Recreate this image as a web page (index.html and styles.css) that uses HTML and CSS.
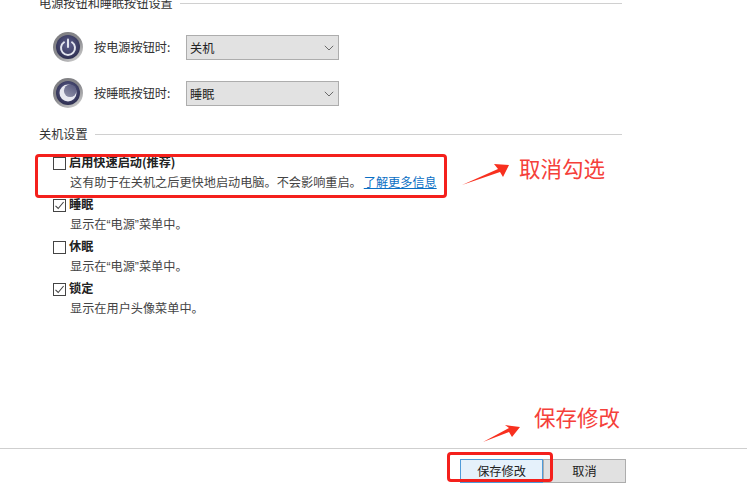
FILE: index.html
```html
<!DOCTYPE html>
<html lang="zh-CN">
<head>
<meta charset="utf-8">
<title>电源选项</title>
<link rel="stylesheet" href="styles.css">
</head>
<body>
<div class="page">
  <main class="content">
    <div class="section-head first"><span>电源按钮和睡眠按钮设置</span></div>
    <div class="power-rows">
      <div class="power-row">
        <svg class="orb" viewBox="0 0 30 30" aria-hidden="true">
          <defs>
            <linearGradient id="ring" x1="0.2" y1="0" x2="0.8" y2="1">
              <stop offset="0" stop-color="#7d7d80"/><stop offset=".5" stop-color="#8a8a8e"/><stop offset="1" stop-color="#cfcfcf"/>
            </linearGradient>
            <radialGradient id="core" cx=".5" cy=".4" r=".65">
              <stop offset="0" stop-color="#5f618f"/><stop offset="1" stop-color="#2a2b4c"/>
            </radialGradient>
            <linearGradient id="moon" x1="0.8" y1="0" x2="0.2" y2="1">
              <stop offset="0" stop-color="#5a5c80"/><stop offset="1" stop-color="#8e90a8"/>
            </linearGradient>
          </defs>
          <circle cx="15" cy="15" r="15" fill="url(#ring)"/>
          <circle cx="15" cy="15" r="12" fill="url(#core)"/>
          <path d="M11 10.200a7 7 0 1 0 8 0" fill="none" stroke="#e2e4ee" stroke-width="2" stroke-linecap="round"/>
          <path d="M15 7.500v7.500" stroke="#e2e4ee" stroke-width="2" stroke-linecap="round"/>
        </svg>
        <span class="power-label">按电源按钮时:</span>
        <div class="select"><span>关机</span><svg class="chev" viewBox="0 0 10 6" aria-hidden="true"><path d="M.8.8 5 5 9.2.8" fill="none" stroke="#6a6a6a" stroke-width="1"/></svg></div>
      </div>
      <div class="power-row">
        <svg class="orb" viewBox="0 0 30 30" aria-hidden="true">
          <circle cx="15" cy="15" r="15" fill="url(#ring)"/>
          <circle cx="15" cy="15" r="12" fill="url(#core)"/>
          <circle cx="15" cy="15" r="8.500" fill="#e8e9f1"/>
          <circle cx="17.200" cy="12.800" r="6.300" fill="url(#moon)"/>
        </svg>
        <span class="power-label">按睡眠按钮时:</span>
        <div class="select"><span>睡眠</span><svg class="chev" viewBox="0 0 10 6" aria-hidden="true"><path d="M.8.8 5 5 9.2.8" fill="none" stroke="#6a6a6a" stroke-width="1"/></svg></div>
      </div>
    </div>

    <div class="section-head second"><span>关机设置</span></div>
    <div class="options">
      <div class="option">
        <div class="option-title"><span class="check"></span><b>启用快速启动(推荐)</b></div>
        <div class="option-desc">这有助于在关机之后更快地启动电脑。不会影响重启。<a class="more" href="#">了解更多信息</a></div>
      </div>
      <div class="option">
        <div class="option-title"><span class="check"><svg viewBox="0 0 11 11" aria-hidden="true"><path d="M1.500 5.800 4.200 8.500 9.600 2" fill="none" stroke="#444" stroke-width="1.100"/></svg></span><b>睡眠</b></div>
        <div class="option-desc">显示在<span class="quote">“</span>电源<span class="quote">”</span>菜单中。</div>
      </div>
      <div class="option">
        <div class="option-title"><span class="check"></span><b>休眠</b></div>
        <div class="option-desc">显示在<span class="quote">“</span>电源<span class="quote">”</span>菜单中。</div>
      </div>
      <div class="option">
        <div class="option-title"><span class="check"><svg viewBox="0 0 11 11" aria-hidden="true"><path d="M1.500 5.800 4.200 8.500 9.600 2" fill="none" stroke="#444" stroke-width="1.100"/></svg></span><b>锁定</b></div>
        <div class="option-desc">显示在用户头像菜单中。</div>
      </div>
    </div>
  </main>

  <footer class="footer">
    <button class="btn primary" type="button">保存修改</button>
    <button class="btn" type="button">取消</button>
  </footer>

  <div class="mark mark-option"></div>
  <div class="mark mark-save"></div>
  <svg class="arrows" viewBox="0 0 747 494" aria-hidden="true">
    <polygon points="462,185 498,169 494,164 509,165 503,177 500,172" fill="#f8301f"/>
    <polygon points="483,442 509,428 505,425 520,427 512,437 509,432" fill="#f8301f"/>
  </svg>
  <span class="note note-uncheck">取消勾选</span>
  <span class="note note-save">保存修改</span>
</div>
</body>
</html>
```

FILE: styles.css
```css
* { box-sizing: border-box; }
html, body { margin: 0; padding: 0; background: #fff; }
body {
  font-family: "Noto Sans CJK SC", "Noto Sans", sans-serif;
  font-size: 12.170px;
  color: #222;
  overflow: hidden;
}
.page {
  position: relative;
  width: 747px;
  height: 494px;
  display: flex;
  flex-direction: column;
  overflow: hidden;
}
.content {
  flex: 1;
  padding: 0 125px 0 39px;
}
.section-head {
  display: flex;
  align-items: center;
  gap: 7px;
  height: 14px;
  line-height: 14px;
  color: #333;
  white-space: nowrap;
}
.section-head::after {
  content: "";
  flex: 1;
  height: 1px;
  background: #d0d0d0;
}
.section-head.first { margin-top: -4px; }
.section-head.second { margin-top: 19px; }
.power-rows {
  display: flex;
  flex-direction: column;
  gap: 16px;
  margin-top: 22px;
  padding-left: 14px;
}
.power-row {
  display: flex;
  align-items: center;
  height: 30px;
}
.orb {
  width: 30px;
  height: 30px;
  flex: none;
  margin-right: 11px;
}
.power-label {
  width: 92px;
  flex: none;
  color: #333;
}
.select {
  width: 153px;
  height: 25px;
  display: flex;
  align-items: center;
  justify-content: space-between;
  padding: 1px 4px 0 3px;
  background: #e2e2e2;
  border: 1px solid #adadad;
}
.chev { width: 10px; height: 6px; }
.options {
  margin-top: 11px;
  display: flex;
  flex-direction: column;
  gap: 2px;
  padding-left: 14px;
}
.option-title {
  display: flex;
  align-items: center;
  gap: 3px;
  height: 20px;
}
.option-title b {
  font-weight: 700;
  color: #222;
}
.check {
  width: 13px;
  height: 13px;
  flex: none;
  margin-top: 3px;
  border: 1px solid #444;
  background: #fff;
  display: flex;
}
.check svg { width: 11px; height: 11px; }
.option-desc {
  height: 20px;
  line-height: 20px;
  padding-left: 17px;
  color: #444;
  white-space: nowrap;
}
.quote { font-family: "Liberation Sans", sans-serif; }
.more {
  margin-left: 2px;
  color: #0a6fc4;
  text-decoration: underline;
}
.footer {
  height: 46px;
  flex: none;
  border-top: 1px solid #cfcfcf;
  padding: 10px 121px 0 0;
  display: flex;
  justify-content: flex-end;
  align-items: flex-start;
}
.btn {
  width: 83px;
  height: 24px;
  padding: 0;
  font: inherit;
  color: #222;
  background: #e1e1e1;
  border: 1px solid #adadad;
}
.btn.primary {
  background: #e5f1fb;
  border: 1px solid #4f9bd9;
}
.mark {
  position: absolute;
  border: 3px solid #f4201c;
  border-radius: 4px;
}
.mark-option { left: 35px; top: 154px; width: 412px; height: 44px; }
.mark-save { left: 447px; top: 452px; width: 106px; height: 30px; }
.arrows {
  position: absolute;
  inset: 0;
  width: 747px;
  height: 494px;
  pointer-events: none;
}
.note {
  position: absolute;
  font-size: 21.500px;
  line-height: 28px;
  color: #f5403a;
  white-space: nowrap;
}
.note-uncheck { left: 519px; top: 154px; }
.note-save { left: 534px; top: 403px; }
```
